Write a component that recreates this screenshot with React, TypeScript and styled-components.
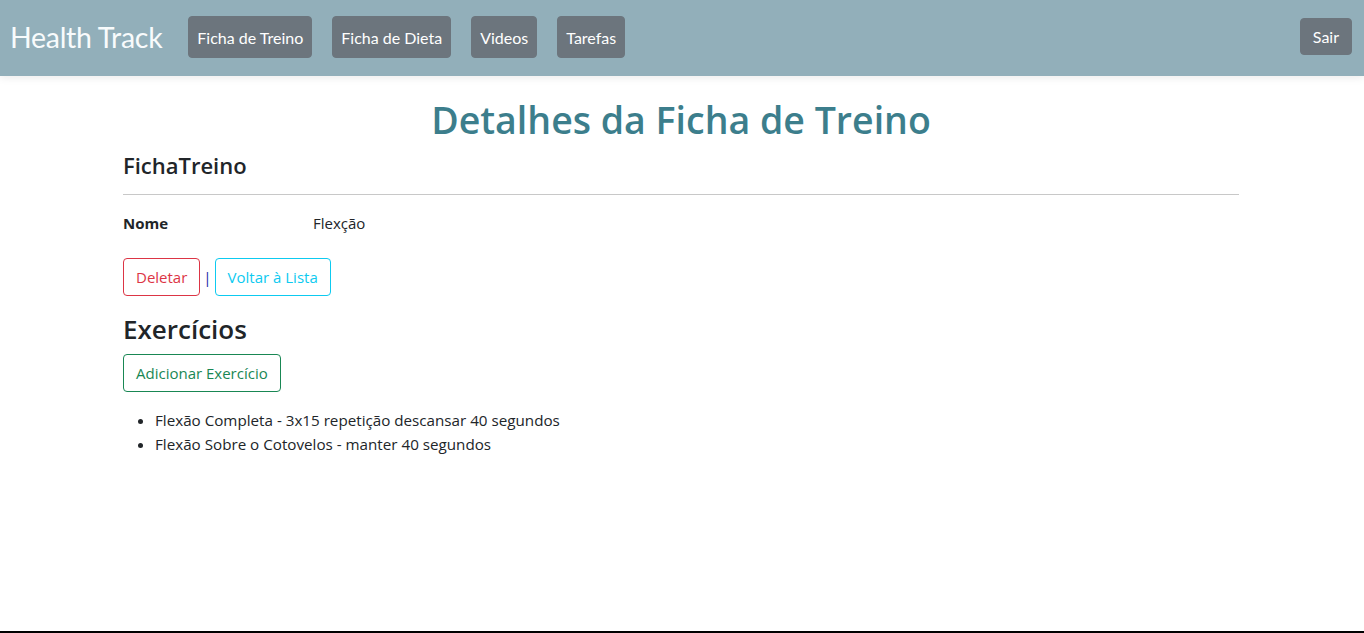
import React from "react";
import styled, { createGlobalStyle } from "styled-components";

const GlobalStyle = createGlobalStyle`
  html, body {
    margin: 0;
    padding: 0;
    height: 100%;
  }
  body {
    font-family: "Open Sans", "Noto Sans", "Liberation Sans", sans-serif;
    font-size: 16px;
    line-height: 1.5;
    color: #212529;
    background: #fff;
  }
  #root {
    min-height: 100%;
  }
  * {
    box-sizing: border-box;
  }
`;

const exercicios = [
  "Flexão Completa - 3x15 repetição descansar 40 segundos",
  "Flexão Sobre o Cotovelos - manter 40 segundos",
];

const App: React.FC = () => {
  return (
    <Page>
      <GlobalStyle />
      <Navbar>
        <Brand>Health Track</Brand>
        <NavLinks>
          <NavButton>Ficha de Treino</NavButton>
          <NavButton>Ficha de Dieta</NavButton>
          <NavButton>Videos</NavButton>
          <NavButton>Tarefas</NavButton>
        </NavLinks>
        <LogoutButton>Sair</LogoutButton>
      </Navbar>
      <Main>
        <Title>Detalhes da Ficha de Treino</Title>
        <SubTitle>FichaTreino</SubTitle>
        <Divider />
        <DetailRow>
          <DetailLabel>Nome</DetailLabel>
          <DetailValue>Flexção</DetailValue>
        </DetailRow>
        <Actions>
          <OutlineButton color="#dc3545">Deletar</OutlineButton>
          <Separator>|</Separator>
          <OutlineButton color="#0dcaf0">Voltar à Lista</OutlineButton>
        </Actions>
        <SectionTitle>Exercícios</SectionTitle>
        <OutlineButton color="#198754">Adicionar Exercício</OutlineButton>
        <ExerciseList>
          {exercicios.map((ex) => (
            <li key={ex}>{ex}</li>
          ))}
        </ExerciseList>
      </Main>
      <Footer />
    </Page>
  );
};

export default App;

const Page = styled.div`
  min-height: 100vh;
  display: flex;
  flex-direction: column;
`;

const Navbar = styled.nav`
  height: 76px;
  background-color: #92afba;
  display: flex;
  align-items: center;
  padding: 0 12px 0 10px;
  box-shadow: 0 2px 8px rgba(0, 0, 0, 0.08);
  position: relative;
  z-index: 1;
`;

const Brand = styled.span`
  font-family: Lato, "Open Sans", sans-serif;
  font-size: 28.5px;
  color: #f8fbfc;
  margin-right: 26px;
  letter-spacing: -0.3px;
  padding-bottom: 2px;
`;

const NavLinks = styled.div`
  display: flex;
  gap: 20px;
  flex: 1;
`;

const NavButton = styled.button`
  font-family: Lato, "Open Sans", sans-serif;
  font-size: 16px;
  color: #fff;
  background-color: #6c757d;
  border: 1px solid #6c757d;
  border-radius: 4px;
  height: 42px;
  padding: 0 8px;
  margin-bottom: 2px;
  cursor: pointer;
`;

const LogoutButton = styled(NavButton)`
  height: 37px;
  padding: 0 12px;
  margin-bottom: 4px;
`;

const Main = styled.main`
  flex: 1;
  width: 1140px;
  margin: 0 auto;
  padding: 0 13px 0 11px;
`;

const Title = styled.h1`
  font-size: 37.5px;
  font-weight: 600;
  color: #3c7e8c;
  text-align: center;
  margin: 21px 0 0;
  line-height: 1.2;
`;

const SubTitle = styled.h4`
  font-size: 22px;
  font-weight: 600;
  margin: 10px 0 0;
  line-height: 1.2;
`;

const Divider = styled.hr`
  border: 0;
  border-top: 1px solid #c8c8c8;
  margin: 16px 0 17px;
`;

const DetailRow = styled.dl`
  display: grid;
  grid-template-columns: 190px 1fr;
  margin: 0 0 24px;
  line-height: 22px;
`;

const DetailLabel = styled.dt`
  font-weight: 700;
  font-size: 15px;
`;

const DetailValue = styled.dd`
  margin: 0;
  font-size: 15px;
`;

const Actions = styled.div`
  display: flex;
  align-items: center;
  gap: 2px;
`;

const Separator = styled.span`
  color: #1a1aa6;
  font-size: 15px;
  padding: 0 1px;
`;

const OutlineButton = styled.button<{ color: string }>`
  font-family: inherit;
  font-size: 15px;
  color: ${(p) => p.color};
  background: transparent;
  border: 1px solid ${(p) => p.color};
  border-radius: 4px;
  height: 38px;
  padding: 0 12px;
  cursor: pointer;
`;

const SectionTitle = styled.h3`
  font-size: 26px;
  font-weight: 600;
  margin: 18px 0 8px;
  line-height: 1.2;
`;

const ExerciseList = styled.ul`
  margin: 16px 0 0;
  padding-left: 32px;
  font-size: 15.2px;
  line-height: 24px;
`;

const Footer = styled.footer`
  height: 2px;
  background: #000;
`;
